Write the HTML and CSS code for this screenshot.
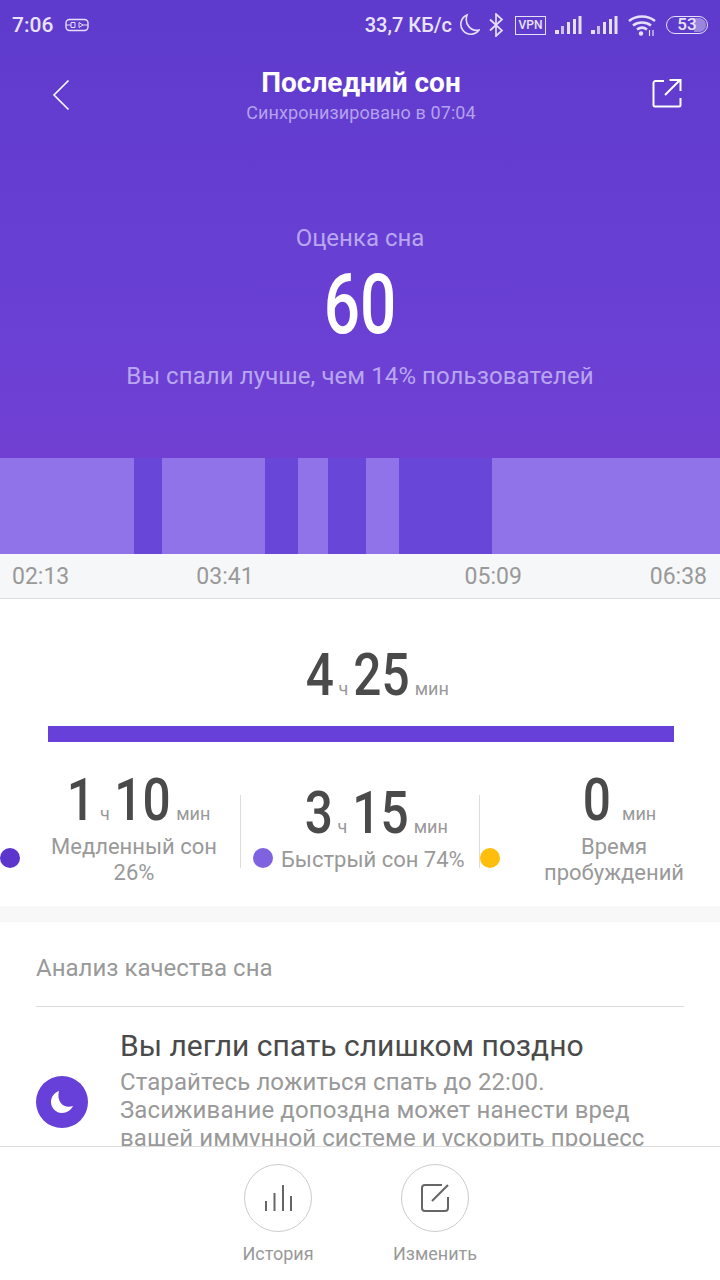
FILE: index.html
```html
<!DOCTYPE html>
<html lang="ru">
<head>
  <meta charset="UTF-8" />
  <meta name="viewport" content="width=device-width, initial-scale=1.0"/>
  <title>Последний сон</title>
  <link rel="stylesheet" href="styles.css">
</head>
<body>
  <div class="page">
    <div class="hero">
      <div class="status-bar">
        <span class="clock">7:06</span>
        <svg class="usb-icon" width="24" height="14" viewBox="0 0 24 14" fill="none" stroke="#e6dffa" stroke-width="1.4"><rect x="1" y="1.5" width="22" height="11" rx="3.5"/><path d="M1 7h5M18 7h5M6 4.5h4v5H6zM14 4.5l4 2.5-4 2.5z" stroke-width="1"/></svg>
        <span class="status-right">
          <span class="speed">33,7 КБ/с</span>
          <svg class="st-moon" width="22" height="24" viewBox="0 0 22 24" fill="none" stroke="#e6dffa" stroke-width="1.6"><path d="M9 2a10 10 0 1 0 12 15C13 19 6 11 9 2z"/></svg>
          <svg class="st-bt" width="15" height="24" viewBox="0 0 15 24" fill="none" stroke="#e6dffa" stroke-width="1.7"><path d="M1 6.500l12 11-6 5.500V1l6 5.500L1 17.500"/></svg>
          <span class="vpn">VPN</span>
          <svg class="st-signal" width="27" height="18" viewBox="0 0 27 18" fill="#e6dffa"><rect x="0" y="14" width="4" height="4"/><rect x="6" y="10" width="3" height="8" opacity=".8"/><rect x="12" y="6" width="3" height="12"/><rect x="18" y="3" width="3" height="15"/><rect x="23.500" y="0" width="3" height="18"/></svg>
          <svg class="st-signal" width="27" height="18" viewBox="0 0 27 18" fill="#e6dffa"><rect x="0" y="14" width="4" height="4"/><rect x="6" y="10" width="3" height="8" opacity=".8"/><rect x="12" y="6" width="3" height="12"/><rect x="18" y="3" width="3" height="15"/><rect x="23.500" y="0" width="3" height="18"/></svg>
          <svg class="st-wifi" width="28" height="21" viewBox="0 0 28 21" fill="none" stroke="#e6dffa" stroke-width="2.600"><path d="M1 6c7.500-6 18.500-6 26 0M5 10.500c5-4 13-4 18 0M9 14.500c3-2.200 7-2.200 10 0"/><circle cx="13" cy="18.500" r="2.200" fill="#e6dffa" stroke="none"/><path d="M21.500 15v6M25 15v6" stroke-width="1.200"/></svg>
          <span class="battery"><span class="battery-fill"></span><span class="battery-num">53</span></span>
        </span>
      </div>

      <div class="topbar">
        <svg class="back-icon" width="18" height="32" viewBox="0 0 18 32" fill="none" stroke="#fff" stroke-width="1.600"><path d="M16.500 1.500L2 16l14.500 14.500"/></svg>
        <div class="topbar-title">
          <h1>Последний сон</h1>
          <p>Синхронизировано в 07:04</p>
        </div>
        <svg class="share-icon" width="30" height="30" viewBox="0 0 30 30" fill="none" stroke="#fff" stroke-width="2"><path d="M12 3H3.500A2 2 0 0 0 1.500 5v22a1.500 1.500 0 0 0 1.500 1.500h24A1.500 1.500 0 0 0 28.500 27v-7M13 17L28 2M17.500 2H28.500V13"/></svg>
      </div>

      <div class="score">
        <p class="score-label">Оценка сна</p>
        <div class="score-num">60</div>
        <p class="score-note">Вы спали лучше, чем 14% пользователей</p>
      </div>
    </div>

    <div class="sleep-bar">
      <span class="seg light" style="width:134px"></span>
      <span class="seg deep" style="width:28px"></span>
      <span class="seg light" style="width:103px"></span>
      <span class="seg deep" style="width:33px"></span>
      <span class="seg light" style="width:30px"></span>
      <span class="seg deep" style="width:38px"></span>
      <span class="seg light" style="width:33px"></span>
      <span class="seg deep" style="width:93px"></span>
      <span class="seg light" style="width:228px"></span>
    </div>
    <div class="times">
      <span>02:13</span>
      <span class="t2">03:41</span>
      <span class="t3">05:09</span>
      <span class="t4">06:38</span>
    </div>

    <div class="summary">
      <div class="total">
        <span class="num">4</span><span class="unit">ч</span><span class="num two">25</span><span class="unit">мин</span>
      </div>
      <div class="total-line"></div>
      <div class="stats">
        <div class="stat stat-deep">
          <span class="dot dot-deep"></span>
          <div class="stat-body">
            <div class="stat-value"><span class="num">1</span><span class="unit">ч</span><span class="num two">10</span><span class="unit">мин</span></div>
            <div class="stat-label">Медленный сон<br>26%</div>
          </div>
        </div>
        <div class="stat stat-light">
          <div class="stat-value"><span class="num">3</span><span class="unit">ч</span><span class="num two">15</span><span class="unit">мин</span></div>
          <div class="stat-label"><span class="dot dot-light"></span>Быстрый сон 74%</div>
        </div>
        <div class="stat stat-awake">
          <span class="dot dot-awake"></span>
          <div class="stat-body">
            <div class="stat-value"><span class="num">0</span><span class="unit unit-gap">мин</span></div>
            <div class="stat-label">Время<br>пробуждений</div>
          </div>
        </div>
      </div>
    </div>

    <div class="gap"></div>

    <div class="analysis">
      <h2>Анализ качества сна</h2>
      <div class="advice">
        <span class="advice-icon">
          <svg width="24" height="24" viewBox="0 0 24 24" fill="#fff"><path d="M9 1C4 3 1 7 1 12c0 6 5 11 11 11 5 0 9-3 11-7C15 19 6 13 9 1z"/></svg>
        </span>
        <div class="advice-text">
          <h3>Вы легли спать слишком поздно</h3>
          <p>Старайтесь ложиться спать до 22:00. Засиживание допоздна может нанести вред вашей иммунной системе и ускорить процесс старения.</p>
        </div>
      </div>
    </div>

    <div class="bottom-bar">
      <div class="action">
        <span class="action-circle">
          <svg width="28" height="28" viewBox="0 0 28 28" fill="none" stroke="#666" stroke-width="2"><path d="M2 27V17M10.500 27V9M19 27V1M27 27V12"/></svg>
        </span>
        <span class="action-label">История</span>
      </div>
      <div class="action">
        <span class="action-circle">
          <svg width="28" height="28" viewBox="0 0 28 28" fill="none" stroke="#666" stroke-width="2"><path d="M21 1H4A3 3 0 0 0 1 4v20a3 3 0 0 0 3 3h20a3 3 0 0 0 3-3V13M11 17L27 1"/></svg>
        </span>
        <span class="action-label">Изменить</span>
      </div>
    </div>
  </div>
</body>
</html>
```

FILE: styles.css
```css
body {
  margin: 0;
  font-family: Roboto, sans-serif;
  background: #fff;
}

h1, h2, h3, p {
  margin: 0;
  font-weight: normal;
}

.page {
  display: flex;
  flex-direction: column;
  height: 1280px;
  overflow: hidden;
}

.hero {
  height: 458px;
  box-sizing: border-box;
  background: linear-gradient(#5e3bcc, #6a40d4 70%, #7140d3);
  color: #fff;
}

.status-bar {
  display: flex;
  align-items: center;
  height: 50px;
  padding: 0 12px;
  color: #e9e3fb;
  font-size: 20px;
  font-weight: 500;
}

.clock {
  margin-right: 12px;
  font-size: 21px;
}

.status-right {
  display: flex;
  align-items: center;
  margin-left: auto;
}

.speed {
  margin-right: 6px;
}

.st-bt {
  margin-left: 9px;
}

.vpn {
  margin-left: 11px;
  width: 31px;
  height: 19px;
  box-sizing: border-box;
  border: 1.5px solid #e6dffa;
  font-size: 12px;
  line-height: 16px;
  text-align: center;
}

.st-signal {
  margin-left: 9px;
}

.st-wifi {
  margin-left: 10px;
}

.battery {
  position: relative;
  margin-left: 10px;
  width: 42px;
  height: 18px;
  box-sizing: border-box;
  border: 1.5px solid #e6dffa;
  border-radius: 9px;
  font-size: 17px;
  line-height: 15px;
  text-align: center;
}

.battery-fill {
  position: absolute;
  right: 1px;
  top: 1px;
  bottom: 1px;
  width: 12px;
  border-radius: 0 7px 7px 0;
  background: #9a85df;
}

.battery-num {
  position: relative;
}

.topbar {
  display: flex;
  align-items: flex-start;
  padding: 0 38px 0 52px;
}

.back-icon {
  margin-top: 29px;
}

.topbar-title {
  flex: 1;
  margin-top: 16px;
  text-align: center;
}

.topbar-title h1 {
  font-size: 28px;
  line-height: 34px;
  font-weight: bold;
}

.topbar-title p {
  font-size: 18px;
  line-height: 26px;
  letter-spacing: .1px;
  color: #b5a1ee;
}

.share-icon {
  margin-top: 28px;
}

.score {
  margin-top: 97px;
  text-align: center;
}

.score-label {
  font-size: 24px;
  line-height: 30px;
  color: #b9a6f0;
}

.score-num {
  margin-top: 6px;
  font-size: 84px;
  font-weight: 500;
  line-height: 92px;
  transform: scaleX(.76);
}

.score-note {
  margin-top: 10px;
  font-size: 24px;
  line-height: 30px;
  letter-spacing: .08px;
  color: #b9a6f0;
}

.sleep-bar {
  display: flex;
  height: 96px;
  flex-shrink: 0;
}

.seg.light {
  background: #9073e9;
}

.seg.deep {
  background: #6846d8;
}

.times {
  display: flex;
  height: 44px;
  flex-shrink: 0;
  padding: 0 13px 0 12px;
  background: #f6f7f8;
  border-bottom: 1px solid #dcdcdc;
  font-size: 23px;
  line-height: 45px;
  color: #999;
}

.t2 { margin-left: 127px; }
.t3 { margin-left: 211px; }
.t4 { margin-left: auto; }

.summary {
  flex-shrink: 0;
  height: 307px;
}

/* digits in the reference are condensed, Roboto Condensed is not available */
.num {
  display: inline-block;
  margin: 0 -.045em;
  font-size: 59px;
  font-weight: 500;
  color: #4a4a4a;
  transform: scaleX(.84);
}

.num.two {
  margin: 0 -.09em;
}

.unit {
  margin: 0 5px;
  font-size: 18px;
  color: #999;
}

.unit-gap {
  margin-left: 11px;
}

.total {
  margin-top: 40px;
  padding-left: 39px;
  height: 72px;
  line-height: 72px;
  text-align: center;
}

.total-line {
  height: 16px;
  margin: 15px 46px 0 48px;
  background: #6640d8;
}

.stats {
  display: flex;
  margin-top: 22px;
}

.stat {
  position: relative;
  width: 240px;
  height: 120px;
  display: flex;
}

.stat-body {
  flex: 1;
  text-align: center;
}

.stat-value {
  height: 70px;
  line-height: 72px;
  white-space: nowrap;
}

.stat-deep .stat-value {
  padding-left: 14px;
}

.stat-awake .stat-value {
  padding-left: 16px;
}

.stat-label {
  font-size: 22px;
  line-height: 26px;
  color: #999;
}

.stat-light {
  display: block;
  padding-left: 13px;
  box-sizing: border-box;
  text-align: center;
}

.stat-light .stat-value {
  margin-top: 20px;
  height: 58px;
  line-height: 58px;
  padding-left: 24px;
}

.stat-light .stat-label {
  display: flex;
  align-items: center;
  margin-top: 3px;
  white-space: nowrap;
  line-height: 30px;
}

.stat-light::before,
.stat-light::after {
  content: "";
  position: absolute;
  top: 31px;
  height: 73px;
  border-left: 1px solid #ddd;
}

.stat-light::before {
  left: 0;
}

.stat-light::after {
  right: 0;
}

.dot {
  flex-shrink: 0;
  width: 20px;
  height: 20px;
  border-radius: 50%;
}

.dot-deep {
  background: #5c35cc;
  margin: 84px 8px 0 0;
}

.dot-light {
  background: #7f62e0;
  margin: 0 8px 4px 0;
}

.dot-awake {
  background: #ffbe0b;
  margin: 84px 8px 0 0;
}

.gap {
  flex-shrink: 0;
  height: 16px;
  background: #f8f8f8;
}

.analysis {
  flex: 1;
  min-height: 0;
  overflow: hidden;
  padding: 0 36px;
}

.analysis h2 {
  height: 85px;
  box-sizing: border-box;
  border-bottom: 1px solid #ddd;
  font-size: 24px;
  line-height: 92px;
  color: #999;
}

.advice {
  display: flex;
  align-items: center;
}

.advice-icon {
  flex-shrink: 0;
  display: flex;
  align-items: center;
  justify-content: center;
  width: 52px;
  height: 52px;
  margin-right: 32px;
  border-radius: 50%;
  background: #6640d8;
}

.advice-text {
  padding-bottom: 16px;
}

.advice-text h3 {
  margin-top: 21px;
  font-size: 30px;
  line-height: 36px;
  color: #4a4a4a;
}

.advice-text p {
  margin-top: 4px;
  font-size: 24px;
  line-height: 28px;
  letter-spacing: .1px;
  color: #999;
}

.bottom-bar {
  flex-shrink: 0;
  display: flex;
  justify-content: center;
  height: 134px;
  box-sizing: border-box;
  padding: 17px 7px 0 0;
  border-top: 1px solid #ddd;
  background: #fff;
}

.action {
  width: 157px;
  display: flex;
  flex-direction: column;
  align-items: center;
}

.action-circle {
  display: flex;
  align-items: center;
  justify-content: center;
  width: 68px;
  height: 68px;
  box-sizing: border-box;
  border: 1px solid #ccc;
  border-radius: 50%;
}

.action-label {
  margin-top: 10px;
  font-size: 18px;
  line-height: 24px;
  color: #999;
}
```
